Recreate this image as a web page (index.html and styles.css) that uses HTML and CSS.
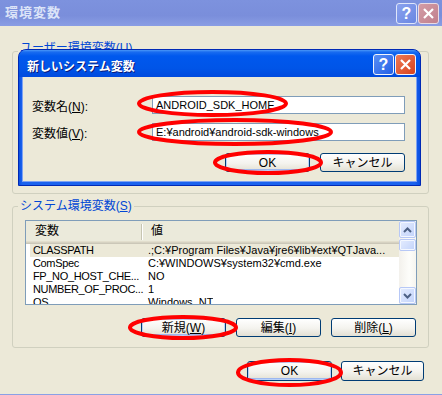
FILE: index.html
```html
<!DOCTYPE html>
<html lang="ja">
<head>
<meta charset="utf-8">
<title>環境変数</title>
<link rel="stylesheet" href="styles.css">
</head>
<body>
<div class="win">
  <div class="titlebar">
    <span class="title">環境変数</span>
    <div class="tbtns">
      <span class="tbtn help-i">?</span>
      <span class="tbtn close-i"><svg width="19" height="19" viewBox="0 0 19 19"><path d="M5 5 L14 14 M14 5 L5 14" stroke="#fff" stroke-width="2.2" fill="none"/></svg></span>
    </div>
  </div>
  <div class="client">
    <div class="group user">
      <div class="glabel">ユーザー環境変数(<u>U</u>)</div>
    </div>
    <div class="group sys">
      <div class="glabel">システム環境変数(<u>S</u>)</div>
      <div class="list">
        <div class="lv">
          <div class="lvh">
            <div class="hc1">変数</div>
            <div class="hsep"></div>
            <div class="hc2">値</div>
          </div>
          <div class="rows">
            <div class="row sel"><div class="c1">CLASSPATH</div><div class="c2">.;C:¥Program Files¥Java¥jre6¥lib¥ext¥QTJava...</div></div>
            <div class="row"><div class="c1">ComSpec</div><div class="c2">C:¥WINDOWS¥system32¥cmd.exe</div></div>
            <div class="row"><div class="c1">FP_NO_HOST_CHE...</div><div class="c2">NO</div></div>
            <div class="row"><div class="c1">NUMBER_OF_PROC...</div><div class="c2">1</div></div>
            <div class="row"><div class="c1">OS</div><div class="c2">Windows_NT</div></div>
          </div>
        </div>
        <div class="sb">
          <div class="sbtn"><svg width="9" height="6" viewBox="0 0 9 6"><polyline points="1,5 4.5,1.5 8,5" fill="none" stroke="#4d6185" stroke-width="2"/></svg></div>
          <div class="thumb"></div>
          <div class="track"></div>
          <div class="sbtn"><svg width="9" height="6" viewBox="0 0 9 6"><polyline points="1,1 4.5,4.5 8,1" fill="none" stroke="#4d6185" stroke-width="2"/></svg></div>
        </div>
      </div>
      <div class="btnrow">
        <div class="btn def">新規(<u>W</u>)</div>
        <div class="btn">編集(<u>I</u>)</div>
        <div class="btn">削除(<u>L</u>)</div>
      </div>
    </div>
    <div class="footer">
      <div class="btn tall def">OK</div>
      <div class="btn tall narrow">キャンセル</div>
    </div>
  </div>

  <div class="dlg">
    <div class="dtitle">
      <span class="dtext">新しいシステム変数</span>
      <div class="tbtns">
        <span class="tbtn dhelp">?</span>
        <span class="tbtn dclose"><svg width="19" height="19" viewBox="0 0 19 19"><path d="M5 5 L14 14 M14 5 L5 14" stroke="#fff" stroke-width="2.2" fill="none"/></svg></span>
      </div>
    </div>
    <div class="dbody">
      <div class="frow"><div class="flabel">変数名(<u>N</u>):</div><div class="field">ANDROID_SDK_HOME</div></div>
      <div class="frow second"><div class="flabel">変数値(<u>V</u>):</div><div class="field">E:¥android¥android-sdk-windows</div></div>
      <div class="dbtns">
        <div class="btn def">OK</div>
        <div class="btn">キャンセル</div>
      </div>
    </div>
  </div>

  <svg class="marks" width="442" height="395" viewBox="0 0 442 395">
    <g fill="none" stroke="#ff0000" stroke-width="4">
      <ellipse cx="212.5" cy="103.5" rx="73.5" ry="11.5"/>
      <ellipse cx="235" cy="132" rx="96" ry="12"/>
      <ellipse cx="268" cy="162.5" rx="53" ry="10.5"/>
      <ellipse cx="183" cy="327.5" rx="53" ry="10.5"/>
      <ellipse cx="289.5" cy="372.5" rx="51.5" ry="12.5"/>
    </g>
  </svg>
</div>
</body>
</html>
```

FILE: styles.css
```css
* { box-sizing: border-box; }
html, body { margin: 0; padding: 0; }
body {
  width: 442px;
  height: 395px;
  overflow: hidden;
  background: #ece9d8;
  color: #000;
  font-family: "Liberation Sans", "Noto Sans CJK JP", sans-serif;
  font-size: 12px;
}
u { text-decoration: underline; text-underline-offset: 1px; }

.win {
  position: relative;
  width: 442px;
  height: 395px;
  display: flex;
  flex-direction: column;
}

/* outer (inactive) title bar */
.titlebar {
  flex: none;
  height: 26px;
  display: flex;
  justify-content: space-between;
  align-items: flex-start;
  padding: 3px 3px 0 5px;
  background: linear-gradient(#7d92de, #7a8edb 60%, #8a9de4);
}
.title {
  font-weight: bold;
  font-size: 13px;
  line-height: 20px;
  color: #dce4f8;
  letter-spacing: 1px;
}
.tbtns { display: flex; gap: 1px; }
.tbtn {
  width: 21px;
  height: 21px;
  border: 1px solid #f2f5fc;
  border-radius: 3px;
  display: flex;
  align-items: center;
  justify-content: center;
  color: #fff;
  font-family: "Liberation Sans", sans-serif;
  font-weight: bold;
  font-size: 16px;
  line-height: 1;
}
.help-i { background: linear-gradient(135deg, #8aa2ee, #6a86e2); border-color: #dfe6fa; }
.close-i { background: linear-gradient(135deg, #d49ca6, #c0808d); border-color: #e9dbe4; }

/* client */
.client {
  flex: 1;
  padding-left: 12px;
  border-bottom: 1px solid #8aa0e6;
}
.group {
  width: 417px;
  border: 1px solid #d0d0bf;
  border-radius: 3px;
}
.group.user { margin-top: 25px; height: 143px; }
.group.sys { margin-top: 12px; padding-bottom: 10px; }
.glabel {
  width: max-content;
  margin: -8px 0 0 5px;
  padding: 0 2px;
  background: #ece9d8;
  color: #0046d5;
  line-height: 14px;
}
.user .glabel { margin-top: -11px; }

/* list view */
.list {
  margin: 7px 11px 0 12px;
  height: 85px;
  border: 1px solid #7f9db9;
  background: #fff;
  display: flex;
}
.lv { flex: 1; overflow: hidden; display: flex; flex-direction: column; }
.lvh {
  flex: none;
  height: 23px;
  display: flex;
  background: #ebeadb;
  box-shadow: inset 0 -1px #cbc7b8, inset 0 -2px #d6d2c2, inset 0 -3px #e2decd;
}
.hc1 { width: 115px; padding-left: 9px; line-height: 21px; }
.hsep {
  width: 2px;
  height: 16px;
  margin-top: 3px;
  border-left: 1px solid #c7c5b2;
  border-right: 1px solid #fff;
}
.hc2 { padding-left: 8px; line-height: 21px; }
.rows { flex: 1; overflow: hidden; }
.row {
  display: flex;
  height: 13px;
  line-height: 13px;
  font-size: 11px;
  white-space: nowrap;
  margin-left: 4px;
}
.row.sel { background: #ece9d8; }
.c1 { width: 112px; flex: none; padding-left: 3px; letter-spacing: -0.35px; }
.c2 { padding-left: 6px; overflow: hidden; }

/* scrollbar */
.sb {
  width: 17px;
  flex: none;
  display: flex;
  flex-direction: column;
  background: linear-gradient(to right, #f3f1ec, #fdfdfa 60%, #f6f5ef);
}
.sbtn, .thumb {
  border: 1px solid #b7c8f6;
  border-radius: 2px;
  background: linear-gradient(135deg, #e4ecfe, #c2d3fb);
  box-shadow: inset 0 0 0 1px #f3f7ff;
}
.sbtn {
  height: 17px;
  display: flex;
  align-items: center;
  justify-content: center;
}
.thumb { height: 12px; margin-top: 1px; }
.track { flex: 1; }

/* buttons */
.btnrow {
  display: flex;
  justify-content: flex-end;
  gap: 10px;
  margin: 13px 12px 0 0;
}
.btn {
  width: 85px;
  height: 19px;
  border: 1px solid #003c74;
  border-radius: 3px;
  background: linear-gradient(#ffffff, #f4f3ee 55%, #e3e0d3);
  display: flex;
  align-items: center;
  justify-content: center;
  line-height: 1;
}
.btn.def { box-shadow: inset 0 0 0 1px #b9d1fa, inset 0 -1px 0 1px #9db8f0; }
.btn.tall { height: 20px; }
.btn.narrow { width: 83px; }
.footer {
  display: flex;
  justify-content: flex-end;
  gap: 9px;
  margin: 13px 18px 0 0;
}

/* new variable dialog (window on top) */
.dlg {
  position: absolute;
  left: 18px;
  top: 49px;
  width: 403px;
  border: 1px solid #0029b5;
  border-radius: 8px 8px 0 0;
  background: linear-gradient(to right, #0a4fe0, #1a62ee 3px, #1a62ee 396px, #0a4fe0);
}
.dtitle {
  height: 27px;
  display: flex;
  justify-content: space-between;
  align-items: flex-start;
  padding: 4px 4px 0 8px;
  border-radius: 7px 7px 0 0;
  background: linear-gradient(#4a98f8 0, #1a6cf0 2px, #0058ee 6px, #0055e8 18px, #004ade 27px);
}
.dtext {
  font-weight: bold;
  font-size: 12px;
  line-height: 21px;
  padding-top: 3px;
  color: #fff;
  text-shadow: 1px 1px #0a1a7a;
}
.dtitle .tbtns { gap: 1px; }
.dhelp { background: linear-gradient(135deg, #5a8ff4, #2460e6); }
.dclose { background: linear-gradient(135deg, #ee7a55, #d8431e); }
.dbody {
  margin: 0 3px 3px;
  background: #ece9d8;
  padding: 19px 12px 10px 10px;
  box-shadow: inset 1px 0 #7ea2f2, inset -1px 0 #7ea2f2, inset 0 -1px #7ea2f2;
}
.frow { display: flex; align-items: center; }
.frow.second { margin-top: 9px; }
.flabel { width: 120px; flex: none; }
.field {
  width: 253px;
  height: 18px;
  border: 1px solid #7f9db9;
  background: #fff;
  font-size: 11px;
  line-height: 16px;
  padding-left: 3px;
  white-space: nowrap;
  overflow: hidden;
}
.dbtns {
  display: flex;
  justify-content: flex-end;
  gap: 10px;
  margin-top: 12px;
}

/* red annotation marks drawn over the screenshot */
.marks {
  position: absolute;
  left: 0;
  top: 0;
  pointer-events: none;
}
```
